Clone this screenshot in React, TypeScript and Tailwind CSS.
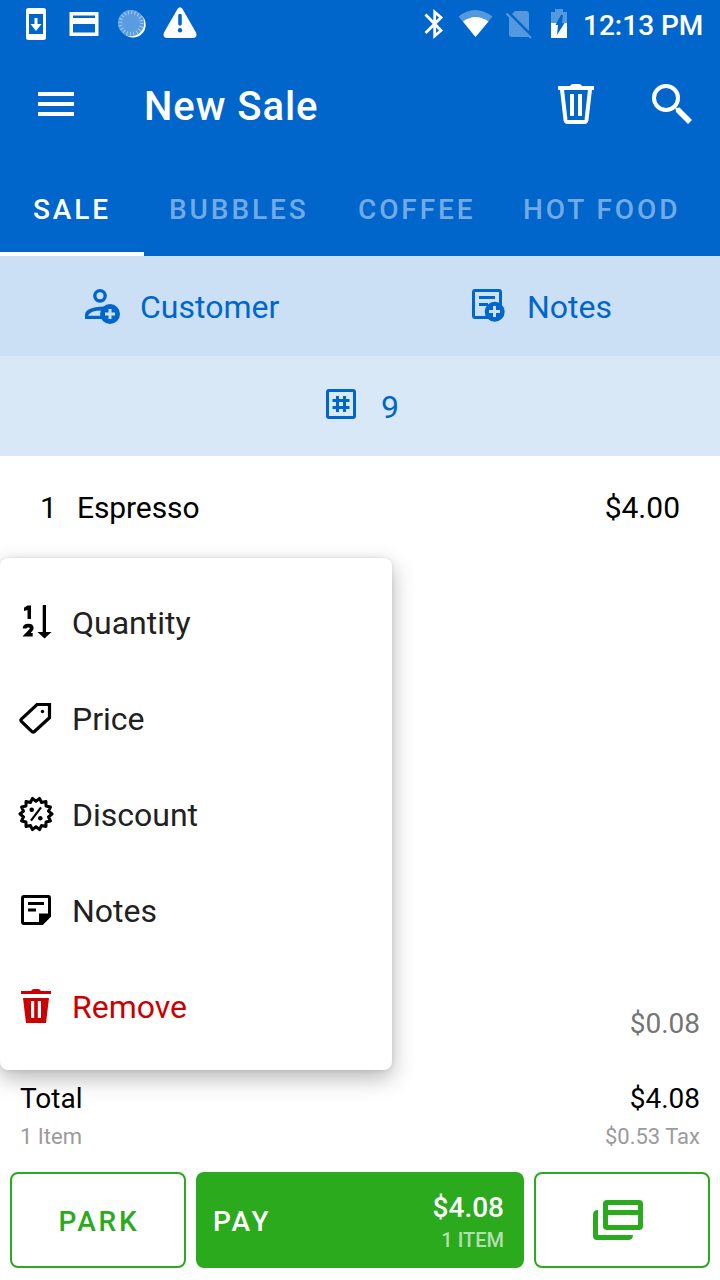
import React from "react";

type IconProps = {
  box: string;
  className: string;
  children: React.ReactNode;
};

function Icon({ box, className, children }: IconProps) {
  return (
    <svg viewBox={box} className={`block shrink-0 ${className}`} fill="currentColor" aria-hidden="true">
      {children}
    </svg>
  );
}

const sealPoints = Array.from({ length: 28 }, (_, i) => {
  const r = i % 2 === 0 ? 16 : 12.8;
  const a = (i * Math.PI) / 14;
  return `${(18 + r * Math.cos(a)).toFixed(2)},${(18 + r * Math.sin(a)).toFixed(2)}`;
}).join(" ");

function StatusBar() {
  return (
    <div className="flex h-12 items-start justify-between">
      <Icon box="0 0 220 48" className="h-12 w-[220px]">
        <path fillRule="evenodd" d="M28.500 8h15a2.500 2.500 0 0 1 2.500 2.500v27a2.500 2.500 0 0 1-2.500 2.500h-15a2.500 2.500 0 0 1-2.500-2.500v-27A2.500 2.500 0 0 1 28.500 8zM29 14v20h14V14z" />
        <path d="M34.500 18h3v6h4L36 31 30.500 24h4z" />
        <path fillRule="evenodd" d="M69.500 12h29v24h-29zM73 15.500v2.500h22v-2.500zM73 24v8.500h22V24z" />
        <circle cx="133" cy="24.800" r="12.700" />
        <circle cx="131" cy="23" r="13.200" fill="#5b9ce0" />
        <circle cx="131" cy="23" r="10.700" fill="none" stroke="#a9cbee" strokeWidth="3.500" strokeDasharray="1 2.360" />
        <path fillRule="evenodd" d="M177.600 8.800q2.400-3.200 4.800 0L196 32.500q1.800 5-3 5.500h-26q-4.800-.5-3-5.500zM178.200 15.500v8.500a1.800 1.800 0 0 0 3.600 0v-8.500a1.800 1.800 0 0 0-3.600 0zM180 28a2.200 2.200 0 1 0 0 4.400a2.200 2.200 0 0 0 0-4.400z" />
      </Icon>
      <div className="flex h-12 items-center">
        <Icon box="420 0 160 48" className="h-12 w-40">
          <path d="M425.500 14.500 441 30.500 434.700 36V12l6.300 5.500L425.500 33" fill="none" stroke="currentColor" strokeWidth="2.800" />
          <path d="M458.500 16.500Q475 3.500 492.500 16.500L475.500 37z" opacity=".33" />
          <path d="M463 21.500q12.500-9 25.500 0L475.500 37z" />
          <path d="M515 11h11q3 0 3 3v17l-17-17zM509 17l20 20h-17q-3 0-3-3z" opacity=".33" />
          <path d="M506.500 13.500 531 38" fill="none" stroke="#5898dd" strokeWidth="2" />
          <path d="M555 9h8v3h4v11h-16V12h4z" opacity=".33" />
          <path d="M551 23h16v15h-16z" />
          <path d="M561 15h2l-1 8h2.500L557 35l1-10h-2.500z" fill="#0066cc" />
        </Icon>
        <span className="ml-[3px] mr-4 mt-[4px] w-[121px] whitespace-nowrap text-[28px] font-medium leading-8">12:13 PM</span>
      </div>
    </div>
  );
}

function AppBar() {
  return (
    <div className="flex h-28 items-center">
      <Icon box="38 92 36 24" className="ml-[38px] h-6 w-9">
        <path d="M38 92h36v4H38zM38 102h36v4H38zM38 112h36v4H38z" />
      </Icon>
      <h1 className="ml-[70px] mt-1.5 text-[40px] font-medium leading-[48px] tracking-[0.95px]">New Sale</h1>
      <Icon box="556 80 144 48" className="ml-auto mr-5 h-12 w-36">
        <path d="M558 86h12q1-2 3-2h6q2 0 3 2h12v4h-36z" />
        <path d="M562 89.500 565.500 120q.3 2 2 2h17q1.700 0 2-2L590 89.500" fill="none" stroke="currentColor" strokeWidth="4" />
        <path d="M570 94h4v22h-4zM578 94h4v22h-4z" />
        <circle cx="666" cy="98" r="12" fill="none" stroke="currentColor" strokeWidth="4" />
        <path d="m679.500 107.500 12.500 12.500-4 4-12-12-.5-4z" />
      </Icon>
    </div>
  );
}

function Tabs() {
  return (
    <nav className="flex h-24 whitespace-nowrap text-[28px] font-medium leading-[100px] tracking-[2.900px] text-[#73aae3]">
      <div className="h-24 w-36 border-b-4 border-white pl-[33px] text-white">SALE</div>
      <div className="w-[189px] pl-[25px]">BUBBLES</div>
      <div className="w-[165px] pl-[25px]">COFFEE</div>
      <div className="w-[222px] pl-[25px]">HOT FOOD</div>
    </nav>
  );
}

function SaleActions() {
  return (
    <section className="text-[32px] leading-10 text-[#0066cc]">
      <div className="flex h-[100px] items-center bg-[#cce0f5]">
        <div className="flex w-[386px] items-center gap-5 pl-[84px]">
          <Icon box="84 286 36 40" className="h-10 w-9">
            <circle cx="100" cy="295.800" r="5.200" fill="none" stroke="currentColor" strokeWidth="3.400" />
            <path fillRule="evenodd" d="M104 306.500Q85 307 85 315v4h18zM102 310.500Q90 310.500 88 315.700h14z" />
            <circle cx="110" cy="314" r="10" />
            <path d="M108.500 309h3v3.500h3.500v3h-3.500v3.500h-3v-3.500H105v-3h3.500z" fill="#cce0f5" />
          </Icon>
          <span className="mt-0.5">Customer</span>
        </div>
        <div className="flex items-center gap-[21px] pl-[85px]">
          <Icon box="471 286 35 40" className="h-10 w-[35px]">
            <rect x="473.500" y="290.500" width="27" height="27" rx="1.500" fill="none" stroke="currentColor" strokeWidth="3" />
            <path d="M479 296h16v3h-16zM479 303h9v3h-9z" />
            <circle cx="494.700" cy="311.700" r="10" />
            <path d="M493 306h3v4h4v3h-4v4h-3v-4h-4v-3h4z" fill="#cce0f5" />
          </Icon>
          <span className="mt-0.5">Notes</span>
        </div>
      </div>
      <div className="flex h-[100px] items-center gap-[25px] bg-[#d9e8f7] pl-[326px]">
        <Icon box="326 389 30 30" className="-mt-1 h-[30px] w-[30px]">
          <rect x="327.500" y="390.500" width="27" height="27" rx="1.500" fill="none" stroke="currentColor" strokeWidth="3" />
          <path d="M332.500 400.500h17M332.500 407.500h17M337.500 396v16M344.500 396v16" fill="none" stroke="currentColor" strokeWidth="3" />
        </Icon>
        <span className="mt-px">9</span>
      </div>
    </section>
  );
}

type Entry = { label: string; icon: React.ReactNode; danger?: boolean };

const entries: Entry[] = [
  {
    label: "Quantity",
    icon: (
      <>
        <path d="M9.500 1.500H13v13.500H9.500V6L6 7V3.700z" />
        <path d="M6.500 24.500C6.500 22.300 8.300 21.600 10.300 21.600s3.500.8 3.500 2.500c0 2-2.600 3.600-5.300 6.700h6.200" fill="none" stroke="currentColor" strokeWidth="3.600" />
        <path d="M24.700 1H28v27h5.500L26.500 34.500 19.500 28h5.200z" />
      </>
    ),
  },
  {
    label: "Price",
    icon: (
      <>
        <path d="M19 4.500h12.500v13.200L16.200 31.800q-1 .8-2 0L3.400 21.300q-1-1.200 0-2.200z" fill="none" stroke="currentColor" strokeWidth="3.200" />
        <circle cx="24.500" cy="11.500" r="1.700" />
      </>
    ),
  },
  {
    label: "Discount",
    icon: (
      <>
        <polygon points={sealPoints} fill="none" stroke="currentColor" strokeWidth="3" strokeLinejoin="round" />
        <circle cx="13.700" cy="13.700" r="2.300" />
        <circle cx="22.300" cy="22.300" r="2.300" />
        <path d="m13 24.700 10-13.400" stroke="currentColor" strokeWidth="2.200" />
      </>
    ),
  },
  {
    label: "Notes",
    icon: (
      <>
        <path d="M6 4.500h24.500q1 0 1 1.500v18L24 31.500H6q-1.500 0-1.500-1.500V6q0-1.500 1.500-1.500z" fill="none" stroke="currentColor" strokeWidth="3" />
        <path d="M10 10h16v3H10zM10 16.500h8v3h-8zM21 21.500h12v3L24.500 33H21z" />
      </>
    ),
  },
  {
    label: "Remove",
    danger: true,
    icon: (
      <>
        <path d="M3 3h10q1-2 3-2h4q2 0 3 2h10v3H3z" />
        <path fillRule="evenodd" d="M5 10h26l-3 25H8zM13 13v17h3.200V13zM19.800 13v17H23V13z" />
      </>
    ),
  },
];

function ItemMenu() {
  return (
    <div className="absolute left-0 top-[558px] flex h-[512px] w-[392px] flex-col rounded-lg bg-white py-4 text-[32px] leading-10 text-[#212121] shadow-[0_8px_22px_rgba(0,0,0,0.29),0_0_4px_rgba(0,0,0,0.1)]">
      {entries.map((entry) => (
        <div key={entry.label} className={`flex h-24 items-center gap-[18px] pl-[18px] ${entry.danger ? "text-[#cc0000]" : ""}`}>
          <span className={entry.danger ? "text-[#cc0000]" : "text-black"}>
            <Icon box="0 0 36 36" className="h-9 w-9">{entry.icon}</Icon>
          </span>
          <span className="mt-px">{entry.label}</span>
        </div>
      ))}
    </div>
  );
}

function Footer() {
  return (
    <footer className="mt-auto">
      <div className="flex justify-end pr-5 text-[28px] leading-8 text-[#757575]">$0.08</div>
      <div className="mt-[43px] flex justify-between px-5 text-[28px] leading-8 text-black">
        <span>Total</span>
        <span>$4.08</span>
      </div>
      <div className="mt-2 flex justify-between px-5 text-[22px] leading-7 text-[#9b9b9b]">
        <span>1 Item</span>
        <span>$0.53 Tax</span>
      </div>
      <div className="mb-3 mt-[21px] flex h-24 gap-2.5 px-2.5 font-medium">
        <button className="w-44 rounded-lg border-2 border-[#2aaa1c] pl-[2px] pt-[4px] text-[28px] leading-8 tracking-[2.800px] text-[#2aaa1c]">PARK</button>
        <button className="flex w-[328px] items-center justify-between rounded-lg bg-[#2aaa1c] pl-[17px] pr-5 text-white">
          <span className="mt-[4px] text-[28px] leading-8 tracking-[2.800px]">PAY</span>
          <span className="mt-1.5 flex flex-col text-right">
            <span className="text-[28px] leading-8">$4.08</span>
            <span className="mt-0.5 text-[20px] leading-7 text-[#b4dfb0]">1 ITEM</span>
          </span>
        </button>
        <button className="flex w-44 items-center justify-center rounded-lg border-2 border-[#2aaa1c] pr-2 text-[#2aaa1c]">
          <Icon box="593 1200 50 40" className="h-10 w-[50px]">
            <path fillRule="evenodd" d="M607 1200h32q4 0 4 4v22q0 4-4 4h-32q-4 0-4-4v-22q0-4 4-4zM608 1205v5h30v-5zM608 1215v10h30v-10z" />
            <path d="M598 1210v25h35q0 5-5 5h-31q-4 0-4-4v-21q0-5 5-5z" />
          </Icon>
        </button>
      </div>
    </footer>
  );
}

export default function App() {
  return (
    <main className="relative flex h-[1280px] w-[720px] flex-col overflow-hidden bg-white font-['Roboto',sans-serif]">
      <header className="bg-[#0066cc] text-white">
        <StatusBar />
        <AppBar />
        <Tabs />
      </header>
      <SaleActions />
      <div className="flex h-[102px] items-center px-10 pt-px text-[30px] leading-9 text-black">
        <span className="w-[37px]">1</span>
        <span className="tracking-[-0.1px]">Espresso</span>
        <span className="ml-auto">$4.00</span>
      </div>
      <Footer />
      <ItemMenu />
    </main>
  );
}
